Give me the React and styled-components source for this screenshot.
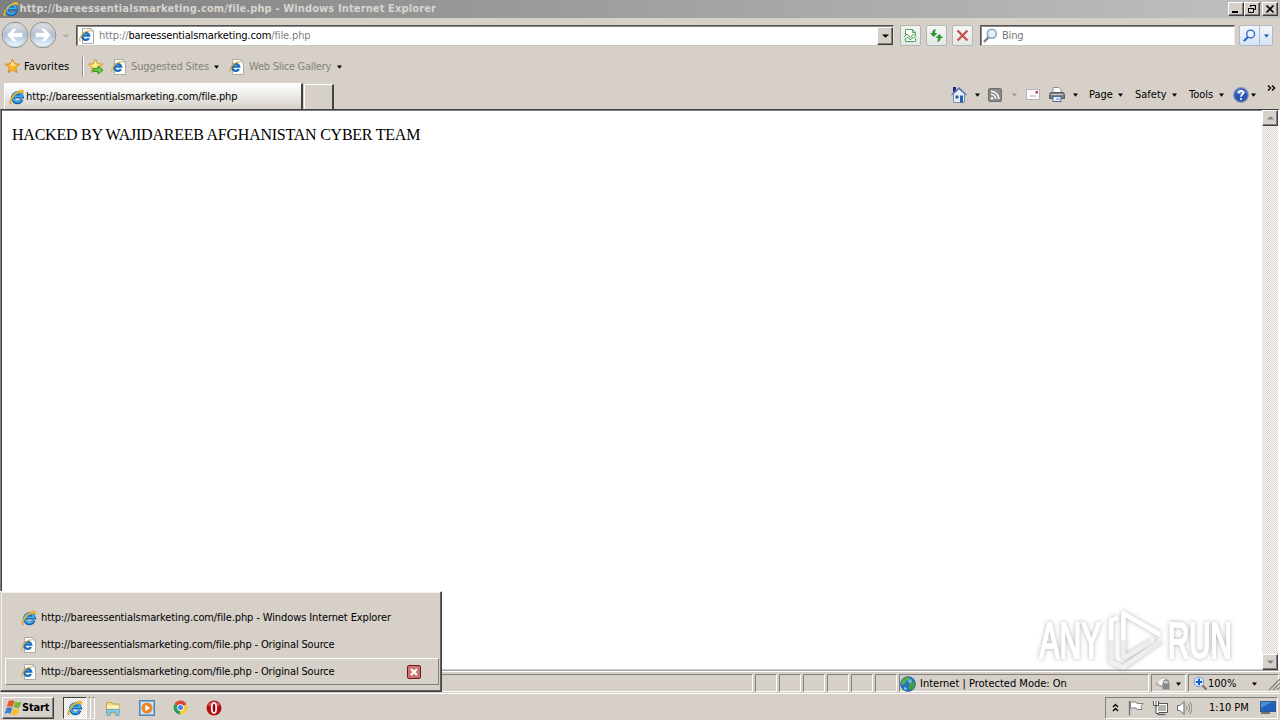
import React from 'react';
import styled, { createGlobalStyle, css } from 'styled-components';

const GlobalStyle = createGlobalStyle`
  * {
    box-sizing: border-box;
  }
  html, body {
    margin: 0;
    padding: 0;
    overflow: hidden;
  }
  svg {
    display: block;
    flex: none;
  }
`;

const face = '#d6d0c9';

const raised = css`
  border: 1px solid;
  border-color: #fff #404040 #404040 #fff;
  box-shadow: inset -1px -1px 0 #808080;
`;

const sunken = css`
  border: 1px solid;
  border-color: #808080 #fff #fff #808080;
`;

const Screen = styled.div`
  position: relative;
  width: 1280px;
  height: 720px;
  display: flex;
  flex-direction: column;
  background-color: ${face};
  font-family: 'DejaVu Sans Condensed', 'DejaVu Sans', sans-serif;
  font-stretch: condensed;
  font-size: 11px;
  color: #000;
  overflow: hidden;
`;

const Label = styled.span`
  flex: none;
  width: ${({ $w }) => ($w ? `${$w}px` : 'auto')};
  margin-left: ${({ $ml }) => $ml || 0}px;
  line-height: 14px;
  white-space: nowrap;
  letter-spacing: ${({ $ls }) => $ls || 0}px;
  color: ${({ $color }) => $color || '#000'};
  font-weight: ${({ $bold }) => ($bold ? 'bold' : 'normal')};
`;

const TitleBar = styled.div`
  flex: none;
  height: 18px;
  display: flex;
  align-items: center;
  padding: 0 2px 0 3px;
  background: linear-gradient(to right, #808080, #c0c0c0);
`;

const TitleText = styled(Label)`
  flex: 1;
`;

const CaptionButton = styled.div`
  width: 16px;
  height: 14px;
  margin-left: ${({ $gap }) => $gap || 0}px;
  background-color: ${face};
  ${raised}
`;

const AddressRow = styled.div`
  flex: none;
  height: 35px;
  display: flex;
  align-items: center;
  padding-left: 1px;
`;

const NavButton = styled.div`
  margin-bottom: 1px;
`;

const AddressBox = styled.div`
  width: 818px;
  height: 21px;
  margin-left: 6px;
  padding: 0 0 0 2px;
  display: flex;
  align-items: center;
  background-color: #fff;
  border: 1px solid;
  border-color: #555 #e8e5e0 #c8cabc #555;
  box-shadow: inset 1px 1px 0 #8a8680;
`;

const DropButton = styled.div`
  width: 16px;
  height: 18px;
  margin-left: auto;
  display: flex;
  align-items: center;
  justify-content: center;
  background-color: ${face};
  ${raised}
`;

const ToolButton = styled.div`
  width: 21px;
  height: 21px;
  margin-left: ${({ $ml }) => $ml}px;
  display: flex;
  align-items: center;
  justify-content: center;
  border: 1px solid #b3b5b5;
  border-radius: 2px;
  background: linear-gradient(#f4f6f4, #e2e8e6);
`;

const SearchBox = styled(AddressBox)`
  width: 255px;
  margin-left: 7px;
`;

const SearchButton = styled.div`
  width: 34px;
  height: 21px;
  margin-left: 4px;
  display: flex;
  align-items: center;
  border: 1px solid #b0b8c4;
  border-radius: 2px;
  background: linear-gradient(#f2f6fb, #d5e3f5);
`;

const SearchHalf = styled.div`
  width: ${({ $w }) => $w}px;
  height: 19px;
  display: flex;
  align-items: center;
  justify-content: center;
  border-left: ${({ $line }) => ($line ? '1px solid #b0b8c4' : 'none')};
`;

const FavoritesRow = styled.div`
  flex: none;
  height: 27px;
  display: flex;
  align-items: center;
  padding-left: 4px;
`;

const Separator = styled.div`
  width: 2px;
  height: 20px;
  margin: 0 3px 0 12px;
  border-left: 1px solid #908c86;
  border-right: 1px solid #fff;
`;

const TabRow = styled.div`
  flex: none;
  height: 29px;
  display: flex;
  align-items: flex-end;
  padding-left: 4px;
`;

const Tab = styled.div`
  width: 299px;
  height: 26px;
  display: flex;
  align-items: center;
  padding: 1px 0 0 4px;
  background: linear-gradient(#fff, #eeedea 40%, ${face});
  border-top: 1px solid #fff;
  border-left: 1px solid #fff;
  border-right: 2px solid #444;
`;

const NewTab = styled.div`
  width: 30px;
  height: 25px;
  margin-left: 1px;
  border-top: 1px solid #fff;
  border-left: 1px solid #fff;
  border-right: 2px solid #444;
`;

const CommandBar = styled.div`
  flex: 1;
  height: 29px;
  display: flex;
  align-items: center;
  justify-content: flex-end;
  padding-right: 4px;
`;

const Chevrons = styled.div`
  margin: 0 0 13px 11px;
`;

const Viewport = styled.div`
  flex: none;
  height: 562px;
  display: flex;
  border: 1px solid;
  border-color: #404040 #fff #a8a49e #808080;
  border-right-width: 2px;
  box-shadow: inset 1px 0 0 #404040, inset 0 1px 0 #808080;
`;

const Document = styled.div`
  flex: 1;
  margin: 1px 0 1px 1px;
  padding: 15px 10px;
  background-color: #fff;
  font-family: 'Liberation Serif', serif;
  font-size: 16px;
  line-height: 18px;
  letter-spacing: -0.24px;
`;

const ScrollTrack = styled.div`
  width: 16px;
  display: flex;
  flex-direction: column;
  justify-content: space-between;
  background: repeating-conic-gradient(#fff 0 25%, #d4d0c8 0 50%) 0 0 / 2px 2px;
`;

const ScrollButton = styled.div`
  height: 16px;
  display: flex;
  align-items: center;
  justify-content: center;
  background-color: ${face};
  ${raised}
`;

const StatusBar = styled.div`
  flex: none;
  height: 22px;
  display: flex;
  align-items: flex-start;
  gap: 2px;
  padding-top: 2px;
  border-top: 1px solid #fff;
`;

const StatusPane = styled.div`
  width: ${({ $w }) => $w}px;
  height: 18px;
  display: flex;
  align-items: center;
  padding-top: 1px;
  padding-left: ${({ $pl }) => $pl || 0}px;
  ${sunken}
`;

const Taskbar = styled.div`
  flex: none;
  height: 27px;
  display: flex;
  align-items: center;
  padding: 1px 0 0 2px;
  border-top: 1px solid #fff;
`;

const StartButton = styled.div`
  width: 52px;
  height: 22px;
  display: flex;
  align-items: center;
  padding-left: 2px;
  ${raised}
`;

const ActiveTask = styled.div`
  width: 24px;
  height: 22px;
  margin-left: 9px;
  display: flex;
  align-items: center;
  justify-content: center;
  background: repeating-conic-gradient(#fff 0 25%, #e4e1dc 0 50%) 0 0 / 2px 2px;
  border: 1px solid;
  border-color: #404040 #fff #fff #404040;
`;

const StackEdge = styled.div`
  width: 3px;
  height: 22px;
  margin-left: 1px;
  border: 1px solid;
  border-color: #808080 #fff #fff transparent;
`;

const Pinned = styled.div`
  margin-left: ${({ $ml }) => $ml}px;
`;

const Tray = styled.div`
  width: 173px;
  height: 22px;
  margin-left: auto;
  margin-right: 2px;
  display: flex;
  align-items: center;
  padding-left: 6px;
  ${sunken}
`;

const Popup = styled.div`
  position: absolute;
  left: 0;
  top: 591px;
  width: 442px;
  height: 101px;
  padding: 12px 3px 3px 4px;
  background-color: ${face};
  border: 1px solid;
  border-color: #fff #404040 #404040 #d4d0c8;
  box-shadow: inset -1px -1px 0 #606060, inset 1px 1px 0 #f4f2f0;
`;

const PopupRow = styled.div`
  width: 434px;
  height: 27px;
  display: flex;
  align-items: center;
  padding-left: 15px;
  border: 1px solid;
  border-color: ${({ $hover }) => ($hover ? '#fff #808080 #808080 #fff' : 'transparent')};

  & > span {
    padding-top: 1px;
  }
`;

const CloseBadge = styled.div`
  margin-left: auto;
  margin-right: 17px;
`;

const Watermark = styled.div`
  position: absolute;
  left: 1030px;
  top: 600px;
`;

const Gap = styled.div`
  flex: none;
  width: ${({ $w }) => $w}px;
`;

const Arrow = ({ color = '#000', up, size = 5 }) => (
  <svg width={size} height="4" viewBox="0 0 6 4" preserveAspectRatio="none">
    <path d={up ? 'M0 3.5h6L3 .3z' : 'M0 .5h6L3 3.7z'} fill={color} />
  </svg>
);

const Glyph = ({ size = 16 }) => (
  <svg width={size} height={size} viewBox="0 0 16 16">
    <path d="M12.8 10.400A4.700 4.700 0 1 1 13 7.700H5" fill="none" stroke="#1460ae" strokeWidth="3.600" />
    <path d="M12.200 10.800A4.700 4.700 0 1 1 13 7.400H5" fill="none" stroke="#42aeee" strokeWidth="1.800" />
    <path
      d="M2.600 15C-.2 15.600-.2 12.300 2.400 8.400 5.600 3.600 11 .2 13.800 1c1.500.5 1.400 2.200.7 3.800C13.500 2.600 9 3.300 5.200 7.300 2.600 10 1.600 12.800 2.600 15z"
      fill="#f0b92c"
      stroke="#b98a22"
      strokeWidth=".3"
    />
  </svg>
);

const PageGlyph = () => (
  <svg width="16" height="16" viewBox="0 0 16 16">
    <path d="M3.500.5h8.500l2.500 2.500v12.500h-11z" fill="#fdfdfb" stroke="#a9aca8" />
    <path d="M12 .5V3h2.500" fill="#e4e4df" stroke="#a9aca8" />
    <path d="M9.900 9.900A3.500 3.500 0 1 1 10.200 7.700H4.500" fill="none" stroke="#1a6ec0" strokeWidth="2.300" />
    <path d="M1.800 13C-.1 13 .4 10.400 2.600 7.300 4.800 4.300 8.600 2.200 10.800 3" fill="none" stroke="#e2b33a" strokeWidth="1.200" />
  </svg>
);

const NavCircle = ({ flip }) => (
  <svg width="28" height="28" viewBox="0 0 28 28">
    <defs>
      <linearGradient id={flip ? 'navF' : 'navB'} x1="0" y1="0" x2="0" y2="1">
        <stop offset="0" stopColor="#dfe3e6" />
        <stop offset=".3" stopColor="#c3ccd6" />
        <stop offset=".5" stopColor="#aebfd1" />
        <stop offset=".78" stopColor="#cfe2f3" />
        <stop offset="1" stopColor="#effaff" />
      </linearGradient>
    </defs>
    <circle cx="14" cy="14" r="12.800" fill="#f6f6f5" stroke="#8b8c8d" />
    <circle cx="14" cy="14" r="11.600" fill={`url(#${flip ? 'navF' : 'navB'})`} stroke="#a9b3bd" strokeWidth=".6" />
    <path
      d="M6.500 14l6-6h2.800L11.500 12.300H21v3.400h-9.500l3.800 4.300h-2.800z"
      fill="#fff"
      stroke="#fff"
      strokeWidth=".8"
      transform={flip ? 'matrix(-1 0 0 1 28 0)' : undefined}
    />
  </svg>
);

const StarIcon = ({ add }) => (
  <svg width="17" height="17" viewBox="0 0 17 17">
    <path
      d="M8.500 1l2 4.800 5.200.4-4 3.300 1.300 5.200-4.500-2.800L4 14.700l1.300-5.200-4-3.300 5.200-.4z"
      fill={add ? '#ffe270' : '#ffb830'}
      stroke={add ? '#d0a020' : '#d88e1c'}
    />
    <path d="M8.500 3l1.200 3.500 3 .3-6.200 1.400z" fill="#fff3b8" />
    {add && <path d="M6 10.600h5V8l5 4-5 4v-2.600H6z" fill="#6fce4a" stroke="#2c8a22" />}
  </svg>
);

const CompatIcon = () => (
  <svg width="15" height="15" viewBox="0 0 15 15">
    <path d="M2.500 7V1.500h7l3 3V7M2.500 11v2.500h10V11" fill="#fff" stroke="#52a552" />
    <path d="M9.500 1.500v3h3" fill="none" stroke="#52a552" />
    <path d="M1 9l3-3 3.500 3.500L10.500 6l3 3M2 11.500l2.500-2.500 3 3 3-3 2.500 2.500" fill="none" stroke="#4da14d" />
  </svg>
);

const RefreshIcon = () => (
  <svg width="15" height="15" viewBox="0 0 15 15">
    <path d="M7 1.200C4.600 1 3.200 2.500 3.200 5H.8l4 4 3.600-4H6c0-1.500.2-2.200 1-3.800z" fill="#2f9a35" />
    <path d="M8 13.800c2.400.2 3.800-1.300 3.800-3.800h2.400l-4-4-3.600 4H9c0 1.500-.2 2.200-1 3.800z" fill="#2f9a35" />
  </svg>
);

const StopIcon = () => (
  <svg width="13" height="13" viewBox="0 0 13 13">
    <path d="M1.500 1.500l10 10M11.500 1.500l-10 10" stroke="#c9504c" strokeWidth="2.200" />
  </svg>
);

const LensIcon = ({ rim = '#8aa5ba', glass = '#dff2fb', handle = '#7f8386', size = 15 }) => (
  <svg width={size} height={size} viewBox="0 0 15 15">
    <path d="M1 14l4.600-4.800" stroke={handle} strokeWidth="2.400" />
    <circle cx="8.800" cy="5.800" r="4.500" fill={glass} stroke={rim} strokeWidth="1.600" />
  </svg>
);

const HomeIcon = () => (
  <svg width="16" height="17" viewBox="0 0 16 17">
    <path d="M2 1h3v5H2z" fill="#26267c" />
    <path d="M2.500 8L8 3l5.500 5v8.500h-11z" fill="#e8effa" stroke="#7c90b4" />
    <path d="M.5 9L8 2l7.500 7" fill="none" stroke="#5c78b0" strokeWidth="1.400" />
    <path d="M4.500 9.500h3v3h-3z" fill="#345a9c" />
    <path d="M9 9.500h3v7H9z" fill="#2a5fa8" />
  </svg>
);

const FeedIcon = () => (
  <svg width="14" height="14" viewBox="0 0 14 14">
    <rect x=".5" y=".5" width="13" height="13" rx="1.500" fill="#8b8b8b" stroke="#6e6e6e" />
    <circle cx="4" cy="10.300" r="1.300" fill="#fff" />
    <path d="M3 6.300a4.700 4.700 0 0 1 4.700 4.700M3 3.200A7.800 7.800 0 0 1 10.800 11" fill="none" stroke="#fff" strokeWidth="1.500" />
  </svg>
);

const MailIcon = () => (
  <svg width="14" height="11" viewBox="0 0 14 11">
    <rect x=".5" y=".5" width="13" height="10" fill="#fbfafc" stroke="#b4b2bb" />
    <path d="M9.500 2h2.500v2.500H9.500z" fill="#cf3848" />
    <path d="M4 7h6" stroke="#d89aa4" />
  </svg>
);

const PrinterIcon = () => (
  <svg width="16" height="15" viewBox="0 0 16 15">
    <path d="M4 .5h6l2 2V6H4z" fill="#fff" stroke="#87919e" />
    <path d="M1.500 5.500h13l1 2v4H.5v-4z" fill="#777c83" stroke="#595e66" />
    <path d="M2 7.500h12" stroke="#c8cbd0" />
    <path d="M4 9.500h8v5H4z" fill="#f2f8ff" stroke="#506a8c" />
    <path d="M7 12h4" stroke="#4c86c8" />
  </svg>
);

const HelpIcon = () => (
  <svg width="16" height="16" viewBox="0 0 16 16">
    <circle cx="8" cy="8" r="7.300" fill="#2b56b4" stroke="#8496bc" strokeWidth="1.200" />
    <path d="M3 6a5.300 5.300 0 0 1 10 0C10 7.500 6 7.500 3 6z" fill="#7898d8" />
    <path d="M5.700 6.200c0-3 4.600-2.900 4.600-.3C10.300 7.700 8 7.600 8 9.800M8 11v2" fill="none" stroke="#fff" strokeWidth="1.700" />
  </svg>
);

const GlobeIcon = () => (
  <svg width="16" height="16" viewBox="0 0 16 16">
    <circle cx="8" cy="8" r="7.500" fill="#2370c4" stroke="#225a86" strokeWidth=".6" />
    <path d="M3 3c2-2 5-2.500 7-1.500L8.500 4 6 5 5 8 2 9C.6 7 1.500 4.500 3 3z" fill="#4db04a" />
    <path d="M9 7l4-2 2 3c0 2.500-1.500 5-3.500 6.200L8 12l1-2z" fill="#3f9f46" />
    <path d="M4 11l3 1-1 2.500L4 13z" fill="#77d0e8" />
    <circle cx="10" cy="5" r="2" fill="#8fd0f0" opacity=".7" />
  </svg>
);

const LockIcon = () => (
  <svg width="16" height="15" viewBox="0 0 16 15">
    <path d="M1 9C3 4 6 2 10 1.500l2 3.500-5 5z" fill="#f4f4f4" stroke="#b4b2b0" />
    <path d="M1 7l6 4" stroke="#aaa" strokeWidth="1.500" />
    <path d="M8.500 8V6.500a2.500 2.500 0 0 1 5 0V8" fill="none" stroke="#8c8c90" strokeWidth="1.300" />
    <rect x="7.500" y="7.500" width="7" height="6" fill="#85858c" />
  </svg>
);

const ZoomIcon = () => (
  <svg width="15" height="15" viewBox="0 0 15 15">
    <path d="M9 9l4.500 4.500" stroke="#8d6a55" strokeWidth="2.200" />
    <circle cx="6" cy="6" r="4.800" fill="#d9eeff" stroke="#7aa3cf" />
    <path d="M6 2.800v6.400M2.800 6h6.400" stroke="#1a5fc4" strokeWidth="2" />
  </svg>
);

const StartFlag = () => (
  <svg width="17" height="16" viewBox="0 0 17 16">
    <path d="M3.600 1C5.800-.2 7.800 0 9.400 1.200L7.600 7C5.800 6 4 6 1.800 7z" fill="#e65a28" />
    <path d="M10.200 1.600c2 1.100 3.900 1 6.300-.2l-1.800 5.900c-2.200 1.100-4.200 1-6.200-.2z" fill="#73b83a" />
    <path d="M1.500 8c2.200-1.100 4-1 5.800 0L5.500 13.700C3.700 12.700 2 12.700-.2 13.800z" fill="#3a80d0" />
    <path d="M8.200 8.400c2 1.200 4 1.200 6.200.2l-1.800 5.800c-2.200 1.100-4.200 1-6.200-.2z" fill="#f6c02c" />
  </svg>
);

const FolderIcon = () => (
  <svg width="16" height="16" viewBox="0 0 16 16">
    <path d="M1.500 2.500h5l1 1.500h6.500v9H1.500z" fill="#f3dc86" stroke="#c5a54c" />
    <path d="M2 5.500h12v3H2z" fill="#fdf3bf" />
    <path d="M2 15.500V9.500h12v6h-3V12H5v3.500z" fill="#8fd0ea" stroke="#4b9cc4" strokeWidth=".8" />
  </svg>
);

const PlayerIcon = () => (
  <svg width="16" height="16" viewBox="0 0 16 16">
    <rect x=".5" y=".5" width="15" height="15" fill="#7db4e2" stroke="#4f86b8" />
    <rect x="2" y="2" width="12" height="12" fill="#d3e6f6" />
    <circle cx="8" cy="8" r="5.500" fill="#f08220" />
    <path d="M6.300 4.700v6.600L11.300 8z" fill="#fff" />
  </svg>
);

const ChromeIcon = () => (
  <svg width="15" height="15" viewBox="0 0 16 16">
    <path d="M8 8L1.800 4A7.400 7.400 0 0 1 14.600 4.600z" fill="#dc4437" />
    <path d="M8 8L1.800 4A7.400 7.400 0 0 0 7.400 15.400z" fill="#2c9d57" />
    <path d="M8 8l6.600-3.400A7.400 7.400 0 0 1 7.400 15.400z" fill="#fcc934" />
    <circle cx="8" cy="8" r="3.600" fill="#fff" />
    <circle cx="8" cy="8" r="2.700" fill="#4484ee" />
  </svg>
);

const OperaIcon = () => (
  <svg width="16" height="16" viewBox="0 0 16 16">
    <circle cx="8" cy="8" r="7.500" fill="#b50d12" />
    <path d="M2 5a7 7 0 0 1 12 0C10 8 6 8 2 5z" fill="#d9545a" />
    <ellipse cx="8" cy="8" rx="2.200" ry="5" fill="#8e0508" stroke="#fff" strokeWidth="1.700" />
  </svg>
);

const TrayFlag = () => (
  <svg width="16" height="16" viewBox="0 0 16 16">
    <path d="M1.500 1v14.500" stroke="#777" strokeWidth="1.400" />
    <path d="M2.500 2h5.500l1 1.500h6l-2 3 1 3H9l-1-1.500H2.500z" fill="#fff" stroke="#808080" />
  </svg>
);

const NetworkIcon = () => (
  <svg width="17" height="16" viewBox="0 0 17 16">
    <path d="M4.500 3.500h11v9h-11z" fill="#b4b2ae" stroke="#555" />
    <path d="M5.500 4.500h9v7h-9z" fill="none" stroke="#fff" />
    <path d="M5.500 14.500h8" stroke="#666" strokeWidth="1.400" />
    <path d="M1.500 1v4.500h5V1M4 1v4M4 5.500v8h3" fill="#fff" stroke="#555" />
  </svg>
);

const SpeakerIcon = () => (
  <svg width="16" height="16" viewBox="0 0 16 16">
    <path d="M1.500 5.500h2.500l4-4v13l-4-4H1.500z" fill="#fff" stroke="#666" />
    <path d="M10 5.500q2 2.500 0 5M12 3.500q3.300 4.500 0 9M14 2q4 6 0 12" fill="none" stroke="#8a8a8a" />
  </svg>
);

const DesktopIcon = () => (
  <svg width="16" height="13" viewBox="0 0 16 13">
    <rect x=".5" y=".5" width="15" height="10" fill="#1e62bc" stroke="#345a8c" />
    <path d="M1 1h11L1 7z" fill="#4a8cd8" />
    <path d="M1 12h9" stroke="#555" strokeWidth="1.500" />
  </svg>
);

const Brand = () => (
  <svg width="210" height="76" viewBox="0 0 210 76">
    <defs>
      <linearGradient id="brandFill" gradientUnits="userSpaceOnUse" x1="0" y1="12" x2="0" y2="68">
        <stop offset="0" stopColor="#fff" />
        <stop offset=".49" stopColor="#fff" />
        <stop offset=".52" stopColor="#ebebeb" />
        <stop offset="1" stopColor="#f1f1f1" />
      </linearGradient>
      <filter id="brandShade" filterUnits="userSpaceOnUse" x="-5" y="-5" width="220" height="86">
        <feDropShadow dx="0" dy="0" stdDeviation="2" floodColor="#444" floodOpacity=".45" />
      </filter>
    </defs>
    <g filter="url(#brandShade)" fill="url(#brandFill)" stroke="url(#brandFill)">
      <g fontFamily="Liberation Sans, sans-serif" fontSize="50" strokeWidth="2">
        <text transform="translate(9.500 58) scale(.6 1)">ANY</text>
        <text transform="translate(138 58) scale(.59 1)">RUN</text>
      </g>
      <g fill="none" strokeWidth="4.500" strokeLinejoin="round">
        <path d="M88 17.500L81 20.500V62L93 67.500L131 40.500" />
        <path d="M93.500 58V13.500L130 34.500" />
        <path d="M93.500 58L124 40" />
      </g>
    </g>
  </svg>
);

const SITE = 'http://bareessentialsmarketing.com/file.php';

const tasks = [
  { text: `${SITE} - Windows Internet Explorer`, icon: <Glyph />, ls: -0.11 },
  { text: `${SITE} - Original Source`, icon: <PageGlyph />, ls: -0.15 },
  { text: `${SITE} - Original Source`, icon: <PageGlyph />, ls: -0.15, hover: true },
];

const App = () => (
  <Screen>
    <GlobalStyle />

    <TitleBar>
      <Glyph />
      <TitleText $bold $ml={0.5} $ls={0.13} $color="#d8d4ce">{`${SITE} - Windows Internet Explorer`}</TitleText>
      <CaptionButton>
        <svg width="14" height="12"><path d="M3 9h6" stroke="#000" strokeWidth="2" /></svg>
      </CaptionButton>
      <CaptionButton>
        <svg width="14" height="12">
          <path d="M5.500 4V2.500h5v4H9M5 2.500h6M3.500 5.500h5v4h-5zM3 5.500h6" fill="none" stroke="#000" />
        </svg>
      </CaptionButton>
      <CaptionButton $gap={2}>
        <svg width="14" height="12"><path d="M3.500 2.500l7 7M10.500 2.500l-7 7" stroke="#000" strokeWidth="1.600" /></svg>
      </CaptionButton>
    </TitleBar>

    <AddressRow>
      <NavButton><NavCircle /></NavButton>
      <NavButton><NavCircle flip /></NavButton>
      <Gap $w={5} />
      <Arrow color="#b5b0aa" size={8} />
      <AddressBox>
        <PageGlyph />
        <Label $ml={4} $ls={-0.13} $color="#808080">
          http://
          <Label $ls={-0.13}>bareessentialsmarketing.com</Label>
          /file.php
        </Label>
        <DropButton><Arrow size={7} /></DropButton>
      </AddressBox>
      <ToolButton $ml={6}><CompatIcon /></ToolButton>
      <ToolButton $ml={5}><RefreshIcon /></ToolButton>
      <ToolButton $ml={5}><StopIcon /></ToolButton>
      <SearchBox>
        <LensIcon />
        <Label $ml={4} $ls={-0.2} $color="#777">Bing</Label>
      </SearchBox>
      <SearchButton>
        <SearchHalf $w={20}><LensIcon rim="#2868c8" glass="#eaf3ff" handle="#2868c8" size={13} /></SearchHalf>
        <SearchHalf $w={13} $line><Arrow color="#2c60a8" /></SearchHalf>
      </SearchButton>
    </AddressRow>

    <FavoritesRow>
      <StarIcon />
      <Label $ml={3} $w={46} $ls={0.08}>Favorites</Label>
      <Separator />
      <StarIcon add />
      <Gap $w={7} />
      <PageGlyph />
      <Label $ml={4} $w={79} $ls={-0.12} $color="#85827d">Suggested Sites</Label>
      <Gap $w={4} />
      <Arrow />
      <Gap $w={10} />
      <PageGlyph />
      <Label $ml={4} $w={83} $ls={-0.25} $color="#85827d">Web Slice Gallery</Label>
      <Gap $w={5} />
      <Arrow />
    </FavoritesRow>

    <TabRow>
      <Tab>
        <Glyph />
        <Label $ml={1} $ls={-0.13}>{SITE}</Label>
      </Tab>
      <NewTab />
      <CommandBar>
        <HomeIcon />
        <Gap $w={8} />
        <Arrow />
        <Gap $w={8} />
        <FeedIcon />
        <Gap $w={10} />
        <Arrow color="#a09c96" />
        <Gap $w={9} />
        <MailIcon />
        <Gap $w={9} />
        <PrinterIcon />
        <Gap $w={8} />
        <Arrow />
        <Gap $w={11} />
        <Label $w={25}>Page</Label>
        <Gap $w={4} />
        <Arrow />
        <Gap $w={12} />
        <Label $w={33}>Safety</Label>
        <Gap $w={4} />
        <Arrow />
        <Gap $w={12} />
        <Label $w={26}>Tools</Label>
        <Gap $w={4} />
        <Arrow />
        <Gap $w={9} />
        <HelpIcon />
        <Gap $w={2} />
        <Arrow />
        <Chevrons>
          <svg width="9" height="6"><path d="M1 .5L3.500 3 1 5.500M5 .5L7.500 3 5 5.500" fill="none" stroke="#000" strokeWidth="1.400" /></svg>
        </Chevrons>
      </CommandBar>
    </TabRow>

    <Viewport>
      <Document>HACKED BY WAJIDAREEB AFGHANISTAN CYBER TEAM</Document>
      <ScrollTrack>
        <ScrollButton><Arrow up size={7} color="#808080" /></ScrollButton>
        <ScrollButton><Arrow size={7} color="#808080" /></ScrollButton>
      </ScrollTrack>
    </Viewport>

    <StatusBar>
      <StatusPane $w={753} />
      {[0, 1, 2, 3, 4, 5].map((n) => (
        <StatusPane key={n} $w={22} />
      ))}
      <StatusPane $w={250}>
        <GlobeIcon />
        <Label $ml={4}>Internet | Protected Mode: On</Label>
      </StatusPane>
      <StatusPane $w={35} $pl={3}>
        <LockIcon />
        <Gap $w={5} />
        <Arrow />
      </StatusPane>
      <StatusPane $w={91} $pl={4}>
        <ZoomIcon />
        <Label $w={30}>100%</Label>
        <Gap $w={14} />
        <Arrow />
        <Gap $w={11} />
        <svg width="12" height="14"><path d="M1 13L12 2M5 13l7-7M9 13l3-3" stroke="#8a8680" strokeWidth="1.400" /></svg>
      </StatusPane>
    </StatusBar>

    <Taskbar>
      <StartButton>
        <StartFlag />
        <Label $bold $ls={-0.15}>Start</Label>
      </StartButton>
      <ActiveTask><Glyph /></ActiveTask>
      <StackEdge />
      <StackEdge />
      <Pinned $ml={10}><FolderIcon /></Pinned>
      <Pinned $ml={18}><PlayerIcon /></Pinned>
      <Pinned $ml={18}><ChromeIcon /></Pinned>
      <Pinned $ml={18}><OperaIcon /></Pinned>
      <Tray>
        <svg width="7" height="9"><path d="M1 4l2.500-2.500L6 4M1 8l2.500-2.500L6 8" fill="none" stroke="#000" strokeWidth="1.300" /></svg>
        <Gap $w={9} />
        <TrayFlag />
        <Gap $w={8} />
        <NetworkIcon />
        <Gap $w={7} />
        <SpeakerIcon />
        <Label $ml={17} $w={40}>1:10 PM</Label>
        <Gap $w={11} />
        <DesktopIcon />
      </Tray>
    </Taskbar>

    <Watermark><Brand /></Watermark>

    <Popup>
      {tasks.map((task, i) => (
        <PopupRow key={i} $hover={task.hover}>
          {task.icon}
          <Label $ml={4} $ls={task.ls}>{task.text}</Label>
          {task.hover && (
            <CloseBadge>
              <svg width="14" height="14">
                <rect x=".5" y=".5" width="13" height="13" rx="1.500" fill="#c67772" stroke="#7c1414" />
                <path d="M4 4l6 6M10 4l-6 6" stroke="#fff" strokeWidth="2" />
              </svg>
            </CloseBadge>
          )}
        </PopupRow>
      ))}
    </Popup>
  </Screen>
);

export default App;
